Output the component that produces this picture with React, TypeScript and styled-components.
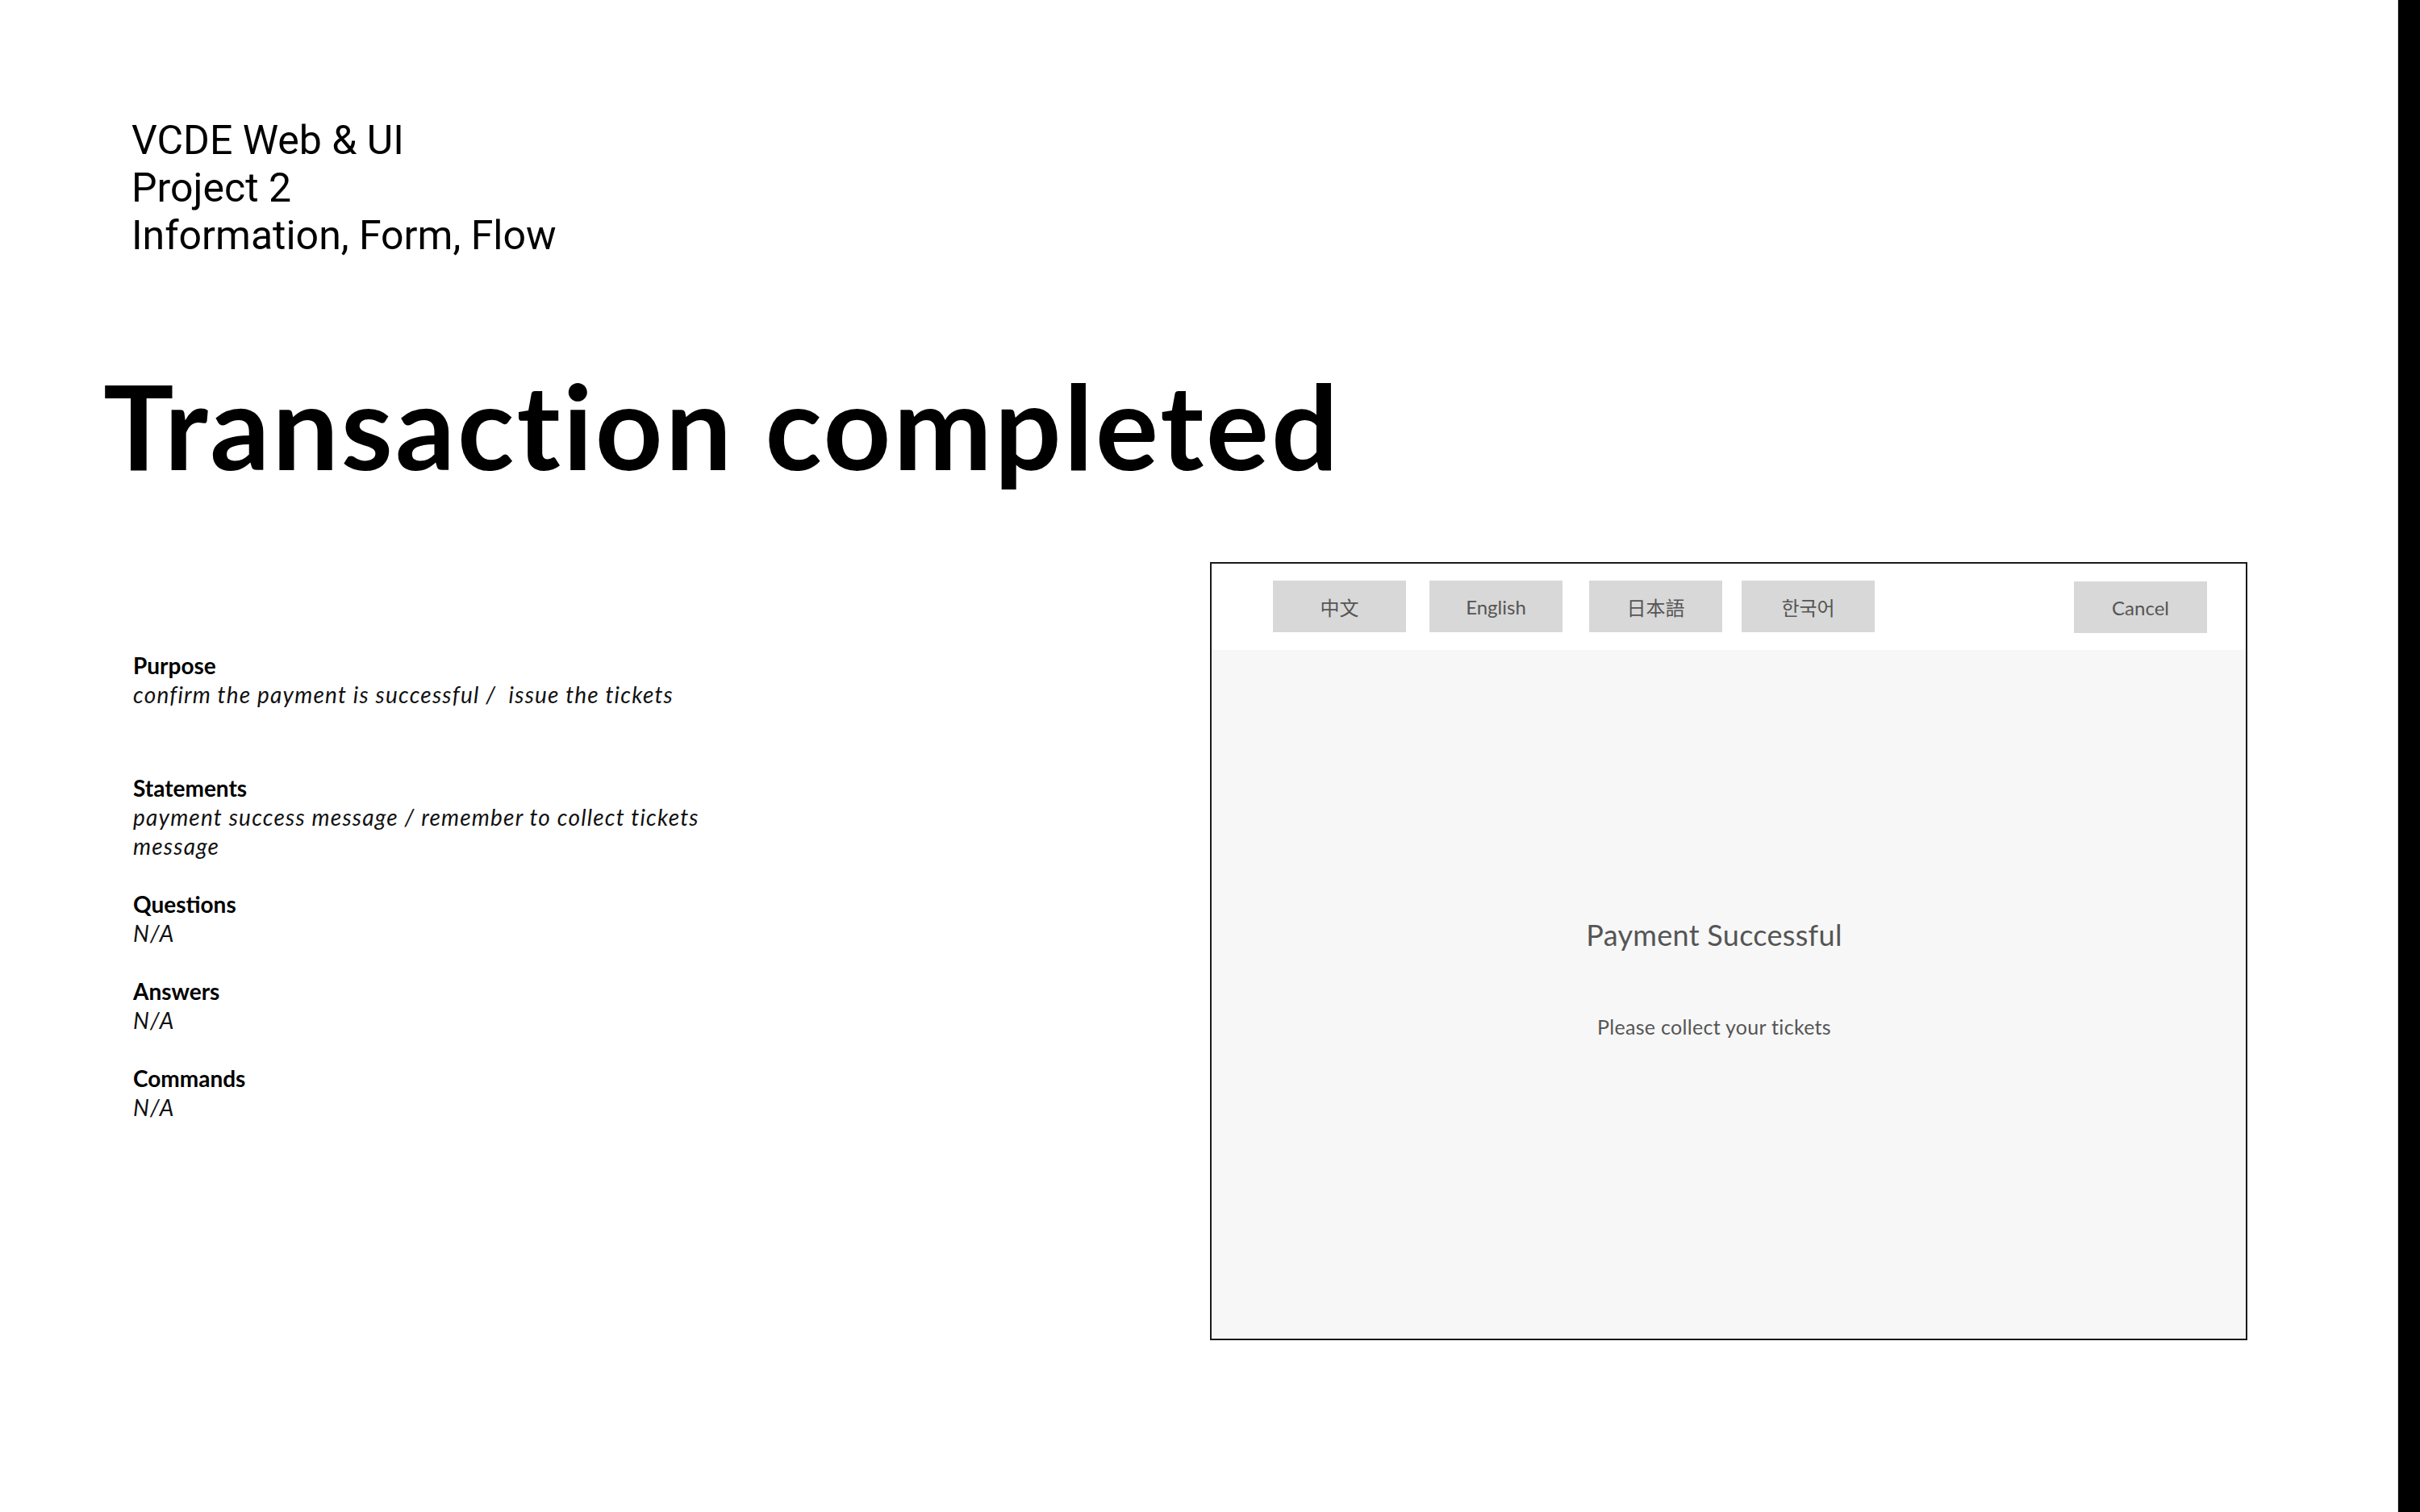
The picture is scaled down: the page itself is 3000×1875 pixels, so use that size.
import React from "react";
import styled, { createGlobalStyle } from "styled-components";

const GlobalStyle = createGlobalStyle`
  html, body {
    margin: 0;
    padding: 0;
    background: #ffffff;
  }
  * { box-sizing: border-box; }
`;

const Page = styled.div`
  display: flex;
  width: 3000px;
  height: 1875px;
  background: #ffffff;
  overflow: hidden;
`;

const Main = styled.main`
  flex: 1;
  padding: 145px 0 0 128px;
  display: flex;
  flex-direction: column;
`;

const EdgeStrip = styled.div`
  width: 28px;
  flex: none;
  background: #000000;
  border-left: 1px solid #dcdcdc;
`;

const Intro = styled.div`
  margin-left: 35px;
  font-family: Roboto, "Liberation Sans", sans-serif;
  font-size: 50px;
  line-height: 59px;
  color: #000000;
`;

const Title = styled.h1`
  margin: 132px 0 0 0;
  font-family: Lato, "Noto Sans", sans-serif;
  font-weight: 700;
  font-size: 146px;
  line-height: 145px;
  color: #000000;
  letter-spacing: 3px;
`;

const ContentRow = styled.div`
  display: flex;
  margin-top: 98px;
`;

const Notes = styled.div`
  width: 1372px;
  padding: 110px 0 0 37px;
  font-family: Lato, "Noto Sans", sans-serif;
  font-size: 28px;
  line-height: 36px;
  color: #000000;
`;

const NoteBlock = styled.div<{ $after: number }>`
  margin-bottom: ${(p) => p.$after}px;
`;

const NoteLabel = styled.div`
  font-weight: 700;
`;

const NoteBody = styled.div`
  font-style: italic;
  width: 790px;
  color: #111111;
  letter-spacing: 1.2px;
`;

const Frame = styled.section`
  width: 1286px;
  height: 965px;
  border: 2px solid #1a1a1a;
  display: flex;
  flex-direction: column;
  background: #f7f7f7;
`;

const TopBar = styled.div`
  height: 107px;
  background: #ffffff;
  display: flex;
  align-items: flex-start;
  padding: 21px 48px 0 76px;
`;

const LangGroup = styled.div`
  display: flex;
  flex: 1;
`;

const KioskButton = styled.button<{ $offset?: number; $drop?: number }>`
  width: 165px;
  height: 64px;
  margin-left: ${(p) => p.$offset ?? 0}px;
  margin-top: ${(p) => p.$drop ?? 0}px;
  border: none;
  background: #d8d8d8;
  color: #555555;
  font-family: Lato, "Noto Sans CJK SC", "Noto Sans CJK JP", "Noto Sans CJK KR", sans-serif;
  font-size: 24px;
  padding: 0;
  display: flex;
  align-items: center;
  justify-content: center;
`;

const Message = styled.div`
  flex: 1;
  display: flex;
  flex-direction: column;
  align-items: center;
  padding: 331px 36px 0 0;
  color: #555555;
  font-family: Lato, "Noto Sans", sans-serif;
`;

const MessageTitle = styled.div`
  font-size: 36px;
  line-height: 44px;
  font-weight: 400;
  letter-spacing: 0.3px;
`;

const MessageSub = styled.div`
  margin-top: 76px;
  font-size: 25px;
  line-height: 32px;
  font-weight: 400;
  letter-spacing: 0.3px;
`;

export default function App() {
  return (
    <>
      <GlobalStyle />
      <Page>
        <Main>
          <Intro>
            <div>VCDE Web &amp; UI</div>
            <div>Project 2</div>
            <div>Information, Form, Flow</div>
          </Intro>
          <Title>Transaction completed</Title>
          <ContentRow>
            <Notes>
              <NoteBlock $after={80}>
                <NoteLabel>Purpose</NoteLabel>
                <NoteBody>confirm the payment is successful /&nbsp; issue the tickets</NoteBody>
              </NoteBlock>
              <NoteBlock $after={36}>
                <NoteLabel>Statements</NoteLabel>
                <NoteBody>payment success message / remember to collect tickets message</NoteBody>
              </NoteBlock>
              <NoteBlock $after={36}>
                <NoteLabel>Questions</NoteLabel>
                <NoteBody>N/A</NoteBody>
              </NoteBlock>
              <NoteBlock $after={36}>
                <NoteLabel>Answers</NoteLabel>
                <NoteBody>N/A</NoteBody>
              </NoteBlock>
              <NoteBlock $after={0}>
                <NoteLabel>Commands</NoteLabel>
                <NoteBody>N/A</NoteBody>
              </NoteBlock>
            </Notes>
            <Frame>
              <TopBar>
                <LangGroup>
                  <KioskButton>中文</KioskButton>
                  <KioskButton $offset={29}>English</KioskButton>
                  <KioskButton $offset={33}>日本語</KioskButton>
                  <KioskButton $offset={24}>한국어</KioskButton>
                </LangGroup>
                <KioskButton $drop={1}>Cancel</KioskButton>
              </TopBar>
              <Message>
                <MessageTitle>Payment Successful</MessageTitle>
                <MessageSub>Please collect your tickets</MessageSub>
              </Message>
            </Frame>
          </ContentRow>
        </Main>
        <EdgeStrip />
      </Page>
    </>
  );
}
